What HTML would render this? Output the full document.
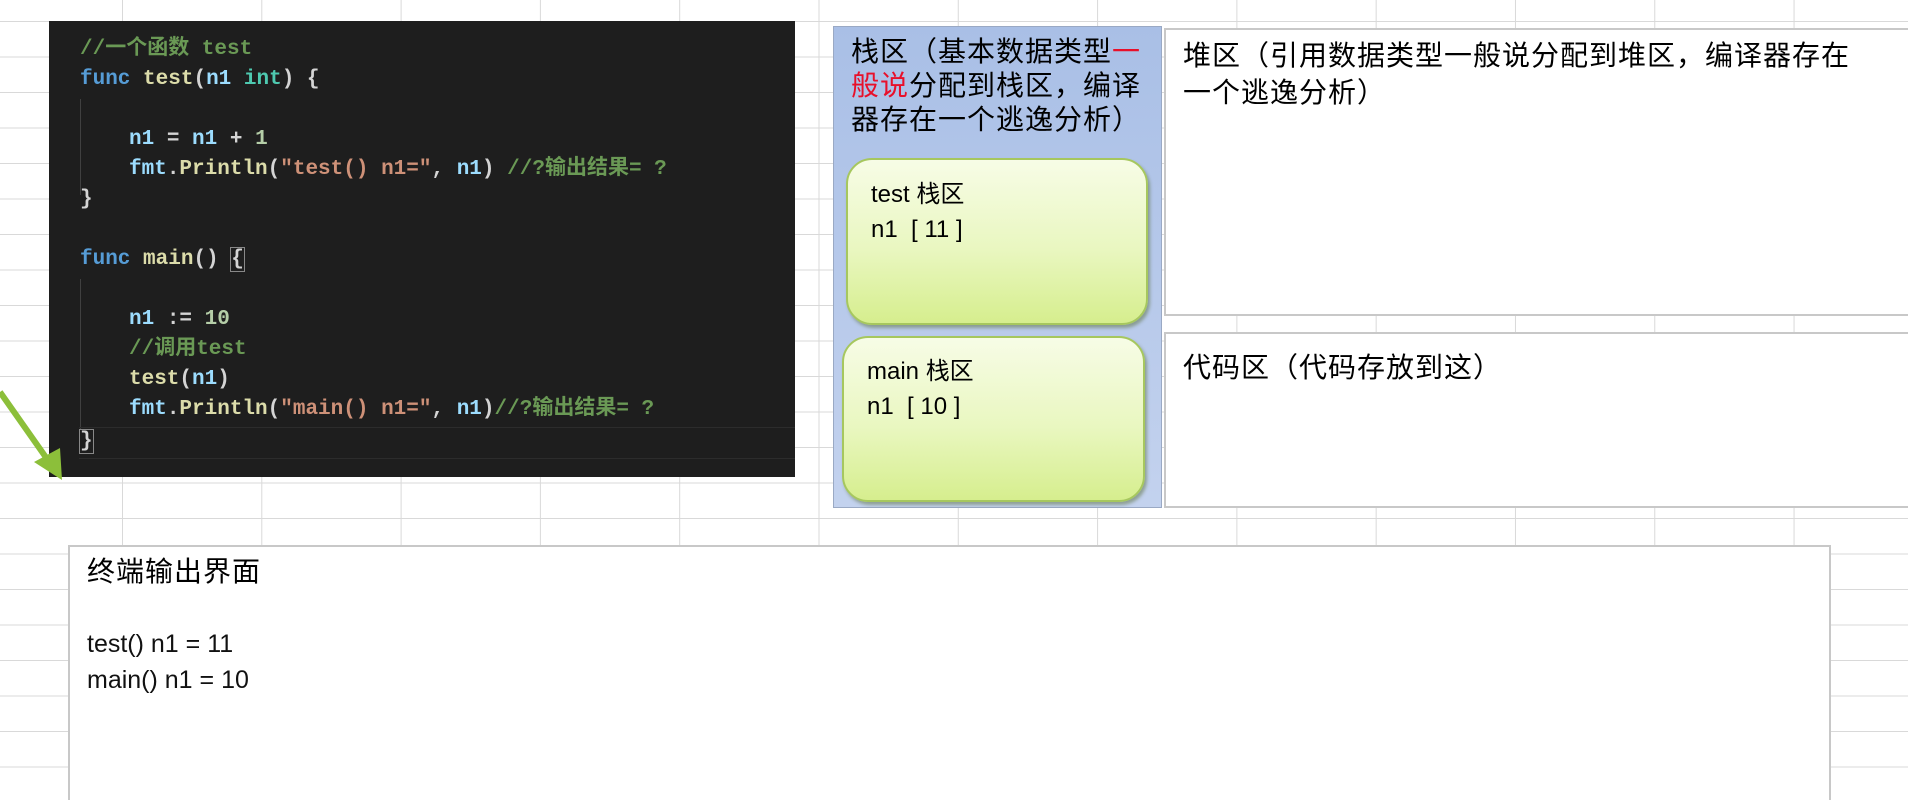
<!DOCTYPE html>
<html><head><meta charset="utf-8"><style>
html,body{margin:0;padding:0;width:1908px;height:800px;overflow:hidden;background:#fff;}
body{position:relative;font-family:"Liberation Sans","Noto Sans CJK SC",sans-serif;}
.grid{position:absolute;left:0;top:0;width:1908px;height:800px;
background-image:linear-gradient(to right,#d9d9d9 1px,transparent 1px),linear-gradient(to bottom,#d9d9d9 1px,transparent 1px);
background-size:139.3px 35.5px;background-position:122px 21px;}
.abs{position:absolute;}
.code{left:49px;top:21px;width:746px;height:456px;background:#1e1e1e;font-family:"Liberation Mono","Noto Sans CJK SC",monospace;font-weight:bold;font-size:21px;color:#d4d4d4;}
.ln{position:absolute;white-space:pre;line-height:30px;}
.k{color:#569cd6}.f{color:#dcdcaa}.v{color:#9cdcfe}.t{color:#4ec9b0}.s{color:#ce9178}.c{color:#6a9955}.n{color:#b5cea8}
.cj{font-family:"Liberation Sans","Noto Sans CJK SC",sans-serif;font-size:28px;letter-spacing:1px;color:#000;white-space:nowrap;}
.green{border:2px solid #a6c75e;border-radius:26px;background:linear-gradient(#f7fce6,#e9f7c0 55%,#d6ee8e);box-shadow:2px 3px 3px rgba(80,100,40,.45);}
.gt{font-size:24px;line-height:35px;color:#000;}
</style></head><body>
<div class="grid"></div>

<div class="abs code">
 <div class="abs" style="left:31px;top:78px;width:1px;height:96px;background:#404040"></div>
 <div class="abs" style="left:31px;top:258px;width:1px;height:150px;background:#404040"></div>
 <div class="abs" style="left:30px;top:406px;width:716px;height:30px;border-top:1px solid #2c2c2c;border-bottom:1px solid #2c2c2c"></div>
 <div class="ln c" style="left:31px;top:14px">//一个函数 test</div>
 <div class="ln" style="left:31px;top:44px"><span class="k">func</span> <span class="f">test</span>(<span class="v">n1</span> <span class="t">int</span>) {</div>
 <div class="ln" style="left:80px;top:104px"><span class="v">n1</span> = <span class="v">n1</span> + <span class="n">1</span></div>
 <div class="ln" style="left:80px;top:134px"><span class="v">fmt</span>.<span class="f">Println</span>(<span class="s">"test() n1="</span>, <span class="v">n1</span>) <span class="c">//?输出结果= ?</span></div>
 <div class="ln" style="left:31px;top:164px">}</div>
 <div class="ln" style="left:31px;top:224px"><span class="k">func</span> <span class="f">main</span>() <span style="outline:1px solid #888">{</span></div>
 <div class="ln" style="left:80px;top:284px"><span class="v">n1</span> := <span class="n">10</span></div>
 <div class="ln c" style="left:80px;top:314px">//调用test</div>
 <div class="ln" style="left:80px;top:344px"><span class="f">test</span>(<span class="v">n1</span>)</div>
 <div class="ln" style="left:80px;top:374px"><span class="v">fmt</span>.<span class="f">Println</span>(<span class="s">"main() n1="</span>, <span class="v">n1</span>)<span class="c">//?输出结果= ?</span></div>
 <div class="ln" style="left:31px;top:406px"><span style="outline:1px solid #888">}</span></div>
</div>

<svg class="abs" style="left:0;top:380px" width="70" height="110">
 <line x1="0" y1="12" x2="52" y2="86" stroke="#8cbf3a" stroke-width="6"/>
 <polygon points="34,82 62,100 60,68" fill="#8cbf3a"/>
</svg>

<div class="abs" style="left:833px;top:26px;width:327px;height:480px;background:linear-gradient(#a9bfe6,#c3d2ee);border:1px solid #9aa9c4;"></div>
<div class="abs cj" style="left:851px;top:35px;line-height:34px;">栈区（基本数据类型<span style="color:#e8102a">一<br>般说</span>分配到栈区，编译<br>器存在一个逃逸分析）</div>
<div class="abs green" style="left:846px;top:158px;width:298px;height:163px;"></div>
<div class="abs gt" style="left:871px;top:177px;">test 栈区<br>n1&nbsp;&nbsp;[ 11 ]</div>
<div class="abs green" style="left:842px;top:336px;width:299px;height:162px;"></div>
<div class="abs gt" style="left:867px;top:354px;">main 栈区<br>n1&nbsp;&nbsp;[ 10 ]</div>

<div class="abs" style="left:1164px;top:28px;width:760px;height:284px;background:#fff;border:2px solid #c8c8c8;"></div>
<div class="abs cj" style="left:1183px;top:37px;line-height:37px;">堆区（引用数据类型一般说分配到堆区，编译器存在<br>一个逃逸分析）</div>
<div class="abs" style="left:1164px;top:332px;width:760px;height:172px;background:#fff;border:2px solid #c8c8c8;"></div>
<div class="abs cj" style="left:1183px;top:349px;line-height:37px;">代码区（代码存放到这）</div>

<div class="abs" style="left:68px;top:545px;width:1759px;height:270px;background:#fff;border:2px solid #c8c8c8;"></div>
<div class="abs cj" style="left:87px;top:553px;line-height:37px;">终端输出界面</div>
<div class="abs" style="left:87px;top:626px;font-size:25px;line-height:36px;color:#111;">test() n1 = 11<br>main() n1 = 10</div>
</body></html>
